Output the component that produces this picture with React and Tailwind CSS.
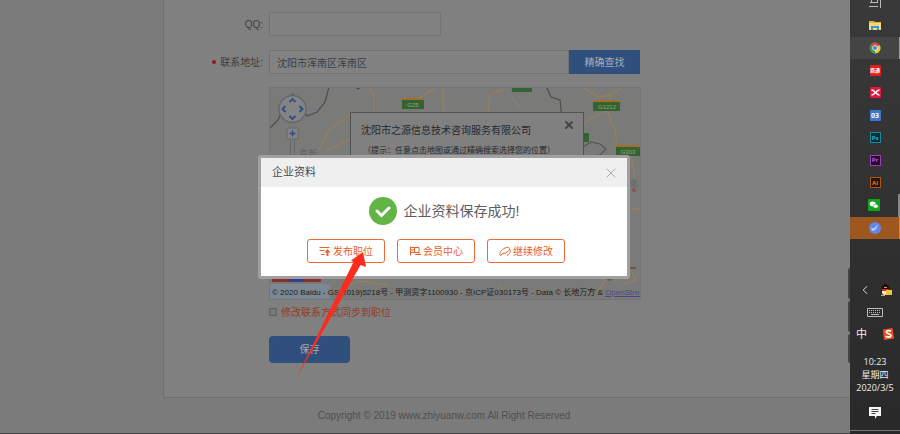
import React, { useState } from 'react';
import { X, ChevronLeft } from 'lucide-react';

const PublishIcon = () => (
  <svg className="h-3 w-3" viewBox="0 0 12 12" fill="none" stroke="#e8622a" strokeWidth="1">
    <path d="M0.5 2.5h10M0.5 5.5h5M2 9.5h3.5" />
    <path d="M8.5 11V7" strokeWidth="2" />
    <path d="M5.5 7.6 8.5 4l3 3.6z" fill="#e8622a" stroke="none" />
  </svg>
);

const MemberIcon = () => (
  <svg className="h-3 w-3" viewBox="0 0 12 12" fill="none" stroke="#e8622a" strokeWidth="1">
    <path d="M1.5 1.5v9M1.5 2.5H10v5H1.5M5.5 2.5v5M1.5 5h4M6 9.5h6M10 7.5v2" />
  </svg>
);

const EditIcon = () => (
  <svg className="h-3 w-3" viewBox="0 0 12 12" fill="none" stroke="#e8622a" strokeWidth="1">
    <path d="M1.5 10.5C0 8 2 5 6 3c2-1 4-1 4.500 0.500S9 6.500 6.500 8L4 8.500 1.500 10.500" />
    <path d="M11 4.500c1 2.500-.5 5-3 6" />
  </svg>
);

const actions = [
  { label: '发布职位', icon: PublishIcon },
  { label: '会员中心', icon: MemberIcon },
  { label: '继续修改', icon: EditIcon },
];

const MapDrawing = () => (
  <svg className="block h-full w-full" viewBox="0 0 370 211" preserveAspectRatio="xMinYMin slice" fill="none">
    <g stroke="#96805a" strokeWidth="1.300">
      <path d="M101 0l3 8v17M174 0l-2 8 2 16M218 25l2-18 14-6M49 62l10-20 22-16M55 64l32-16M150 10l15-10" />
      <path d="M314 0l15 9 12-2 10-7M341 8l-4 14-37 21M337 22l8 20 2 15 14 10 4 24M362 121h8M345 196l5-12M230 196l4 9M60 205l30-12 28 4" />
      <path d="M330 181l6 10-8 12M360 180l6 12-12 4" />
    </g>
    <path d="M250 20l-14-18" stroke="#858585" />
    <path d="M0 40l8-8 5-12 10-14 14 22 10-4 8-10 4-15 8-3 10 3 6-2 5 4 6-4M277 0l4 9 9 3 2 18" stroke="#4d4d4d" strokeWidth="1.200" />
    <path d="M313 59l8-5 9 2 6 5-6 6-10 1" stroke="#555" strokeWidth="1.200" />
    <path d="M354 180h12M332 188l8 4 5-4M318 202h8" stroke="#655f48" strokeWidth="2" />
    <circle cx="364" cy="102" r="2" fill="#94504c" />
    <path d="M0 196h60v15H0z" fill="#7b8793" />
    <path d="M2 188h17v6H2zM34 188h17v6H34z" fill="#85302f" />
    <path d="M19 188h15v6H19z" fill="#30408f" />
    <g>
      <path d="M132 11h22v10h-22zM242 0h20v4h-20zM323 13h27v10h-27zM312 45h7v9h-7zM346 58h24v10h-24z" fill="#35632f" />
      <path d="M132 10h22v2h-22zM323 12h27v2h-27zM346 57h24v2h-24z" fill="#a46d2d" />
    </g>
    <g fill="#91a58e" fontFamily="Liberation Sans, sans-serif" fontSize="6" textAnchor="middle">
      <text x="143" y="19">G25</text>
      <text x="337" y="21">G1212</text>
      <text x="358" y="66">G303</text>
    </g>
    <text x="29" y="69" fill="#5e5e5e" fontFamily="Noto Sans CJK SC, sans-serif" fontSize="9">阜新</text>
    <text x="352" y="98" fill="#5e5e5e" fontFamily="Noto Sans CJK SC, sans-serif" fontSize="8">通化</text>
    <path d="M20.500 52v20M24.500 52v20" stroke="#666" />
    <circle cx="22.500" cy="21" r="13.500" fill="#828486" stroke="#62676c" strokeWidth="1.300" />
    <path d="M19.500 14l3-3 3 3M19.500 28l3 3 3-3M15.500 18l-3 3 3 3M29.500 18l3 3-3 3" stroke="#2f4d80" strokeWidth="1.800" />
    <rect x="17" y="40" width="11" height="11" rx="1" fill="#828486" stroke="#62676c" />
    <path d="M22.500 42.500v6M19.500 45.500h6" stroke="#2f4d80" strokeWidth="1.500" />
  </svg>
);

const MapPanel = () => (
  <div className="relative mt-[13px] h-[213px] w-[372px] overflow-hidden border border-[#747474] bg-[#7a7a79]">
    <MapDrawing />
    <div className="absolute left-20 top-6 h-24 w-[234px] border border-[#525252] bg-[#808080] px-[10px] pt-[10px] text-[#292929]">
      <button aria-label="关闭提示" className="absolute right-2 top-1.5 text-[#464646]">
        <X className="h-3 w-3" strokeWidth={4} />
      </button>
      <p className="text-[10px] leading-4">沈阳市之源信息技术咨询服务有限公司</p>
      <p className="mt-1 whitespace-nowrap pl-0.5 text-[8px] leading-4">（提示：任意点击地图或通过精确搜索选择您的位置）</p>
    </div>
    <p className="absolute bottom-0 left-0.5 whitespace-nowrap text-[8px] leading-3 text-[#1d1d1d]">
      © 2020 Baidu - GS(2019)5218号 - 甲测资字1100930 - 京ICP证030173号 - Data © 长地万方 &amp;{' '}
      <a href="#osm" className="text-[#49498a] underline">OpenStreetM</a>
    </p>
  </div>
);

const ProfileForm = () => {
  const [address, setAddress] = useState('沈阳市浑南区浑南区');

  return (
    <form className="ml-[163px] border-b border-l border-[#707070] bg-[#808080] pb-[34px] pt-3 text-[10px] text-[#3e3e3e]">
      <div className="flex items-center">
        <label htmlFor="qq" className="w-[105px] shrink-0 pr-1.5 text-right">QQ:</label>
        <input id="qq" className="h-6 w-[172px] border border-[#737373] bg-[#828282] px-1.5" />
      </div>
      <div className="mt-3.5 flex items-center">
        <label htmlFor="address" className="flex w-[105px] shrink-0 items-center justify-end gap-1 whitespace-nowrap pr-1.5">
          <span className="h-1 w-1 rounded-full bg-[#8c1822]" />
          <span>联系地址:</span>
        </label>
        <input
          id="address"
          value={address}
          onChange={(e) => setAddress(e.target.value)}
          className="h-6 w-[300px] border border-[#737373] bg-[#828282] px-[7px]"
        />
        <button type="button" className="h-6 w-[71px] bg-[#2f4f7d] text-[#a5adb8]">精确查找</button>
      </div>
      <div className="ml-[105px]">
        <MapPanel />
        <label className="mt-1 flex h-4 items-center gap-1 text-[#90401e]">
          <input type="checkbox" className="h-2 w-2 appearance-none rounded-[1px] border border-[#5c5c5c] bg-[#777]" />
          修改联系方式同步到职位
        </label>
        <button type="button" className="mt-4 block h-[27px] w-[81px] rounded-sm bg-[#2f4f7d] text-[#a5adb8]">保存</button>
      </div>
    </form>
  );
};

const SuccessDialog = () => (
  <div role="dialog" aria-label="企业资料" className="w-[372px] rounded-[3px] border-[3px] border-[#a0a0a0] bg-white">
    <div className="flex h-[29px] items-center justify-between bg-[#efefef] pl-[11px] pr-2">
      <h2 className="text-[11px] text-[#4c4c4c]">企业资料</h2>
      <button aria-label="关闭" className="text-[#aaa]">
        <X className="h-4 w-4" strokeWidth={1.5} />
      </button>
    </div>
    <div className="flex items-center justify-center gap-[7px] pt-2.5">
      <svg className="h-7 w-7" viewBox="0 0 28 28">
        <circle cx="14" cy="14" r="14" fill="#62b445" />
        <path d="M8 14l4.500 4.500L20 11" fill="none" stroke="#fff" strokeWidth="3" strokeLinecap="round" />
      </svg>
      <p className="text-[14px] leading-5 text-[#5c5c5c]">企业资料保存成功!</p>
    </div>
    <div className="flex justify-center gap-3 pb-[13px] pr-4 pt-3.5">
      {actions.map(({ label, icon: Icon }) => (
        <button
          key={label}
          className="flex h-6 w-[78px] items-center justify-center gap-0.5 rounded-[3px] border border-[#ed6a35] text-[10px] text-[#e8622a]"
        >
          <Icon />
          {label}
        </button>
      ))}
    </div>
  </div>
);

const Arrow = () => (
  <svg className="pointer-events-none absolute left-[290px] top-[245px] h-[140px] w-20" viewBox="0 0 80 140">
    <path d="M6 134 63.500 17 61 15.500 73 7l3 15-5.500-2z" fill="#fb2b1e" />
  </svg>
);

const AppBadge = ({ text, className }) => (
  <span className={`flex h-[11px] w-[11px] items-center justify-center whitespace-nowrap font-bold leading-none ${className}`}>{text}</span>
);

const FolderIcon = () => (
  <svg className="h-3 w-3" viewBox="0 0 12 12">
    <path d="M0 2h5l1 1h6v8H0z" fill="#e0b43c" />
    <path d="M0 4h12v7H0z" fill="#f5d77c" />
    <path d="M2 11V7h8v4H8V9H4v2z" fill="#3c98d3" />
  </svg>
);

const ChromeIcon = () => (
  <svg className="h-3 w-3" viewBox="0 0 12 12">
    <circle cx="6" cy="6" r="5.500" fill="#3d9b51" />
    <path d="M1.200 3.300a5.500 5.500 0 0 1 9.600 0L6 6z" fill="#d94a3c" />
    <path d="M10.800 3.300A5.500 5.500 0 0 1 6 11.500L6 6z" fill="#efc53b" />
    <circle cx="6" cy="6" r="2.700" fill="#eee" />
    <circle cx="6" cy="6" r="2" fill="#4484dc" />
  </svg>
);

const WechatIcon = () => (
  <svg className="h-3 w-3" viewBox="0 0 12 12">
    <rect width="12" height="12" rx="1" fill="#12a51b" />
    <ellipse cx="4.700" cy="5" rx="3" ry="2.400" fill="#fff" />
    <ellipse cx="7.700" cy="7.200" rx="2.500" ry="2" fill="#fff" stroke="#12a51b" strokeWidth=".5" />
  </svg>
);

const BirdIcon = () => (
  <svg className="h-3 w-3" viewBox="0 0 12 12">
    <circle cx="6" cy="6" r="6" fill="#6584ee" />
    <path d="M2 6c3 1 5-1 7-4-1 4-2 7-6 7z" fill="#a6d7ff" />
  </svg>
);

const RedCrossIcon = () => (
  <svg className="h-[11px] w-[11px]" viewBox="0 0 11 11">
    <rect width="11" height="11" rx="1" fill="#e51642" />
    <path d="M1.500 3c2 0 3 1.500 4 2.500S7.500 8 9.500 8M1.500 8c2 0 3-1.500 4-2.500S7.500 3 9.500 3" stroke="#fff" strokeWidth="1.500" fill="none" />
  </svg>
);

const apps = [
  { name: 'folder', icon: <FolderIcon /> },
  { name: 'chrome', icon: <ChromeIcon />, row: 'bg-[#444] border-r border-[#999]' },
  { name: 'red', icon: <AppBadge text="商通" className="rounded-[1px] bg-[#dc1f20] text-[5px] text-white" /> },
  { name: 'cross', icon: <RedCrossIcon /> },
  { name: 'blue', icon: <AppBadge text="03" className="rounded-[1px] bg-[#3b78d0] text-[7px] text-white" /> },
  { name: 'ps', icon: <AppBadge text="Ps" className="border border-[#168ba0] bg-[#062c38] text-[6px] text-[#1cb6cd]" /> },
  { name: 'pr', icon: <AppBadge text="Pr" className="border border-[#9a3fb3] bg-[#28082e] text-[6px] text-[#c45be0]" /> },
  { name: 'ai', icon: <AppBadge text="Ai" className="border border-[#a95516] bg-[#2b1405] text-[6px] text-[#e57920]" /> },
  { name: 'wechat', icon: <WechatIcon />, row: 'border-r-2 border-[#888]' },
  { name: 'bird', icon: <BirdIcon />, row: 'bg-[#9f5720] border-r border-[#f07c1c]' },
];

const Taskbar = () => (
  <aside className="flex w-[50px] shrink-0 flex-col bg-linear-to-b from-[#393939] to-[#292929] font-['Open_Sans','Noto_Sans_CJK_SC',sans-serif] text-[9px] text-[#ededed]">
    <div className="flex h-3.5 justify-center">
      <svg className="h-2 w-3" viewBox="0 0 12 8" fill="none" stroke="#bbb">
        <path d="M2.500 0v3M8.500 0v3M1 2.500h8M0 6.500h9M11.500 0v8" />
      </svg>
    </div>
    <div className="grid h-[225px] grid-rows-10">
      {apps.map((app) => (
        <button key={app.name} aria-label={app.name} className={`flex items-center justify-center ${app.row || ''}`}>
          {app.icon}
        </button>
      ))}
    </div>
    <div className="mt-10 flex h-[22px] items-center justify-between px-2">
      <ChevronLeft className="h-3.5 w-3.5" strokeWidth={1.5} />
      <svg className="h-3 w-3" viewBox="0 0 12 12">
        <ellipse cx="5.500" cy="5.500" rx="4" ry="5.500" fill="#111" />
        <ellipse cx="4.500" cy="8" rx="2.500" ry="3" fill="#eee" />
        <path d="M2 5h7v2H2z" fill="#d92b1c" />
        <path d="M6 6h6v5H6z" fill="#f3c72f" />
        <path d="M4 3h3v1H4zM1 11h4v1H1z" fill="#eea31f" />
      </svg>
    </div>
    <div className="flex h-[22px] items-center justify-center">
      <svg className="h-[9px] w-4" viewBox="0 0 16 9" fill="none" stroke="#bbb">
        <path d="M.5.5h15v8H.5z" />
        <path d="M2 2.500h12M2 4.500h12" strokeDasharray="1 1" />
        <path d="M4 6.500h8" />
      </svg>
    </div>
    <div className="flex h-[22px] items-center justify-between px-1.5">
      <span className="text-[11px]">中</span>
      <svg className="h-3 w-3" viewBox="0 0 12 12">
        <path d="M1 1.500 10.500 0 12 10.500 2 12z" fill="#ee5024" />
        <path d="M9 3C6 2 4 3 4.500 4.500S9 5.500 9 7.500 6 9.500 3.500 8.500" stroke="#fff" strokeWidth="1.600" fill="none" />
      </svg>
    </div>
    <div className="mt-2.5 text-center leading-[13px]">
      <p>10:23</p>
      <p>星期四</p>
      <p>2020/3/5</p>
    </div>
    <div className="flex grow flex-col items-center justify-between border-b border-[#252525] pt-3">
      <svg className="h-[13px] w-3" viewBox="0 0 12 13">
        <path d="M0 1h12v9H8l-2 3v-3H0z" fill="#f5f5f5" />
        <path d="M2.500 3.500h7M2.500 5.500h7M2.500 7.500h4" stroke="#444" />
      </svg>
      <span className="mb-0.5 h-px w-full bg-[#777]" />
    </div>
  </aside>
);

export default function App() {
  return (
    <div className="flex min-h-screen font-['Liberation_Sans','Noto_Sans_CJK_SC',sans-serif]">
      <main className="relative min-w-0 flex-1 border-b border-[#424242] bg-[#7b7b7b]">
        <ProfileForm />
        <footer className="py-2.5 pl-[38px] text-center text-[10px] leading-[15px] text-[#4f4f4f]">
          Copyright © 2019 www.zhiyuanw.com All Right Reserved
        </footer>
        <div className="absolute inset-0 flex items-start justify-center pl-[38px] pt-[155px]">
          <SuccessDialog />
        </div>
        <Arrow />
        <div className="absolute right-0 top-[268px] flex flex-col gap-0.5">
          <span className="h-[31px] w-0.5 rounded-l bg-[#444]" />
          <span className="h-[31px] w-0.5 rounded-l bg-[#444]" />
          <span className="h-[29px] w-0.5 rounded-l bg-[#444]" />
        </div>
      </main>
      <Taskbar />
    </div>
  );
}
